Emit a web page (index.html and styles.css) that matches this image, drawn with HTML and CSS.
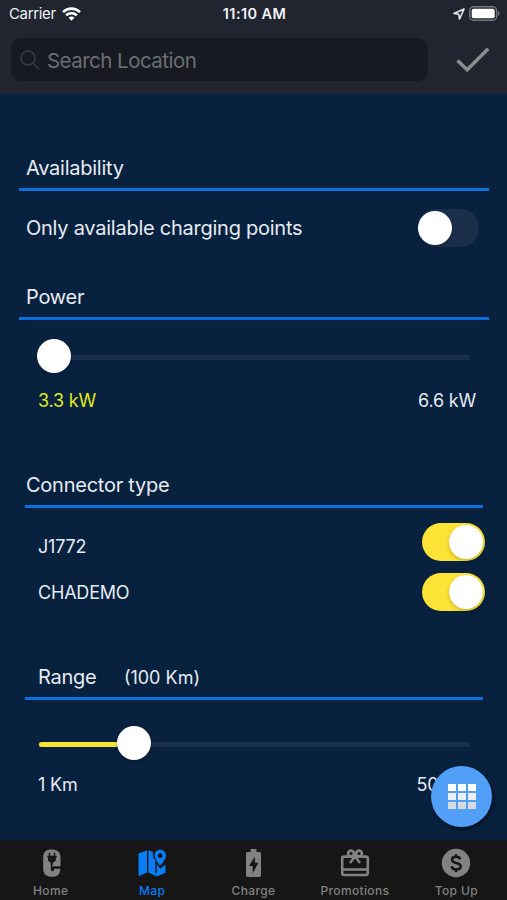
FILE: index.html
```html
<!DOCTYPE html>
<html lang="en">
<head>
    <meta charset="UTF-8">
    <meta name="viewport" content="width=device-width, initial-scale=1.0">
    <title>Search Filters</title>
    <link rel="stylesheet" href="styles.css">
</head>
<body>
    <header class="header">
        <div class="status-bar">
            <div class="carrier">
                <span>Carrier</span>
                <svg width="19" height="14" viewBox="0 0 19 14" fill="none" stroke="#fff" stroke-width="2.6">
                    <path d="M1 5.1C5.8.5 13.2.5 18 5.1M4.1 8.3c3.1-2.9 7.7-2.9 10.8 0"/>
                    <path d="M9.5 13.8l-3-3c1.8-1.6 4.2-1.6 6 0z" fill="#fff" stroke="none"/>
                </svg>
            </div>
            <span class="time">11:10 AM</span>
            <div class="indicators">
                <svg width="12" height="12" viewBox="0 0 12 12" fill="none" stroke="#e8e9ec" stroke-width="1.6" stroke-linejoin="round">
                    <path d="M11 1L1 5.4l4.7.8.9 4.8z"/>
                </svg>
                <svg width="31" height="15" viewBox="0 0 31 15">
                    <rect x=".7" y=".7" width="27" height="13.6" rx="4" fill="none" stroke="#73767c" stroke-width="1.4"/>
                    <rect x="2.7" y="2.7" width="23" height="9.6" rx="2" fill="#fff"/>
                    <path d="M29 5c2 1 2 4 0 5z" fill="#73767c"/>
                </svg>
            </div>
        </div>
        <div class="search-row">
            <div class="search-box">
                <svg width="20" height="20" viewBox="0 0 20 20" fill="none" stroke="#353941" stroke-width="1.7">
                    <circle cx="8" cy="8" r="7"/>
                    <path d="M13 13l6.3 6.3"/>
                </svg>
                <span>Search Location</span>
            </div>
            <svg class="check" width="34" height="26" viewBox="0 0 34 26" fill="none" stroke="#8b8c8f" stroke-width="3.6">
                <path d="M1.5 13.5l9.7 9.2L32.2 1.8"/>
            </svg>
        </div>
    </header>

    <main class="filters">
        <section class="group availability">
            <h2>Availability</h2>
            <div class="option">
                <span class="lead">Only available charging points</span>
                <div class="toggle"></div>
            </div>
        </section>

        <section class="group power">
            <h2>Power</h2>
            <div class="slider">
                <div class="thumb"></div>
            </div>
            <div class="limits">
                <span class="selected">3.3 kW</span>
                <span>6.6 kW</span>
            </div>
        </section>

        <section class="group narrow connector">
            <h2>Connector type</h2>
            <div class="option">
                <span>J1772</span>
                <div class="toggle on"></div>
            </div>
            <div class="option">
                <span class="chademo">CHADEMO</span>
                <div class="toggle on"></div>
            </div>
        </section>

        <section class="group narrow range">
            <h2>Range <small>(100 Km)</small></h2>
            <div class="slider">
                <div class="fill" style="width: 78px"></div>
                <div class="thumb"></div>
            </div>
            <div class="limits">
                <span>1 Km</span>
                <span>500 Km</span>
            </div>
        </section>
    </main>

    <div class="fab">
        <i></i><i></i><i></i>
        <i></i><i></i><i></i>
        <i></i><i></i><i></i>
    </div>

    <nav class="tabs">
        <div class="tab">
            <svg width="30" height="30" viewBox="0 0 30 30">
                <path d="M15.500 1.500c5.900 0 9 2.600 9 7.800v8.900h-9.700v2.300c0 2 .4 2.700 1.700 2.700s1.700-.7 1.700-2.500h6.100c0 5.500-2.700 8-8.200 8-6 0-8.900-2.800-8.900-8.300V9.300c0-5.200 2.700-7.800 8.300-7.800z" fill="currentColor"/>
                <path d="M13.500 4.800v4M18.500 4.800v4" stroke="#161616" stroke-width="1.500"/>
                <path d="M11.300 7.800h9.400v1.600h-.8v1.900c0 1.700-1.200 2.900-3 3.200v1.300c0 1.300-.7 2.200-2.200 2.600v-3.900c-1.700-.4-2.700-1.500-2.700-3.200V9.400h-.7z" fill="#161616"/>
            </svg>
            <span>Home</span>
        </div>
        <div class="tab active">
            <svg width="30" height="30" viewBox="0 0 30 30" fill="currentColor">
                <path d="M1.500 5.500L10 2.200v22.300l-8.500 3.700zM11.400 2.200l4.600 1.700c-.7 3 .2 5.600 2.300 8.600v12l1.400.6v3.400l-8.300-3.900z"/>
                <path d="M28.500 16.500v8.300l-8.800 3.700V16l3.500 4.700z"/>
                <path d="M23.200 1.800c-3.300 0-5.700 2.400-5.700 5.600 0 4 5.700 10.400 5.700 10.400S29 11.400 29 7.400c0-3.200-2.500-5.600-5.800-5.600zm0 3.500a2.400 2.400 0 110 4.800 2.400 2.400 0 010-4.800z" fill-rule="evenodd"/>
            </svg>
            <span>Map</span>
        </div>
        <div class="tab">
            <svg width="30" height="30" viewBox="0 0 30 30" fill="currentColor">
                <path d="M11.500 1h6v3h2.800c1 0 1.700.7 1.700 1.700v21.600c0 1-.7 1.700-1.700 1.700H8.700c-1 0-1.700-.7-1.700-1.700V5.700C7 4.700 7.700 4 8.700 4h2.800z"/>
                <path d="M16 8.500L10 18h3.700v7.500l5.600-10.700h-3.500z" fill="#161616"/>
            </svg>
            <span>Charge</span>
        </div>
        <div class="tab">
            <svg width="30" height="30" viewBox="0 0 30 30" fill="none" stroke="currentColor" stroke-width="2.6">
                <rect x="2.2" y="8.6" width="25.6" height="18.4" rx="2"/>
                <path d="M2 21.500h26"/>
                <circle cx="11" cy="5.500" r="2.900"/>
                <circle cx="19" cy="5.500" r="2.900"/>
                <path d="M10 15l5-6.500 5 6.500"/>
            </svg>
            <span>Promotions</span>
        </div>
        <div class="tab">
            <svg width="30" height="30" viewBox="0 0 30 30">
                <circle cx="15" cy="15" r="14.2" fill="currentColor"/>
                <path d="M19.300 11.300c-.5-1.700-1.900-2.600-4.200-2.600-2.500 0-4.100 1.200-4.100 3 0 4.500 8.700 2.100 8.700 6.600 0 2-1.700 3.200-4.400 3.200-2.600 0-4.300-1.100-4.700-3.200M15 6.300v3M15 21v3" fill="none" stroke="#161616" stroke-width="2.500"/>
            </svg>
            <span>Top Up</span>
        </div>
    </nav>
</body>
</html>
```
FILE: styles.css
```css
* {
    box-sizing: border-box;
}
body {
    margin: 0;
    height: 900px;
    display: flex;
    flex-direction: column;
    overflow: hidden;
    background: #08213f;
    color: #e6ebf1;
    font-family: Inter, "Liberation Sans", sans-serif;
}
svg {
    display: block;
}

/* header */
.header {
    flex-shrink: 0;
    height: 94px;
    background: #20252f;
}
.status-bar {
    height: 27px;
    padding: 0 7px 0 9px;
    display: grid;
    grid-template-columns: 1fr auto 1fr;
    align-items: center;
    color: #f1f2f4;
    font-size: 15px;
}
.carrier {
    display: flex;
    align-items: center;
    gap: 6px;
    letter-spacing: -0.35px;
}
.time {
    font-size: 14.5px;
    font-weight: 600;
    letter-spacing: 0.4px;
}
.indicators {
    display: flex;
    justify-content: flex-end;
    align-items: center;
    gap: 4px;
}
.search-row {
    display: flex;
    align-items: center;
    padding: 11px 17px 0 11px;
    justify-content: space-between;
}
.search-box {
    width: 417px;
    height: 43px;
    display: flex;
    align-items: center;
    gap: 7px;
    padding: 1px 0 0 9px;
    border-radius: 11px;
    background: #171a22;
    color: #6b6e73;
    font-size: 20.5px;
    letter-spacing: -0.53px;
}

/* filters */
.filters {
    flex: 1;
    min-height: 0;
    padding: 60px 18px 0 19px;
}
.group h2 {
    margin: 0;
    height: 37px;
    padding: 0 7px;
    border-bottom: 3px solid #0c70dc;
    font-size: 20px;
    font-weight: 400;
    line-height: 28px;
    letter-spacing: -0.25px;
}
.option {
    display: flex;
    justify-content: space-between;
    align-items: center;
    font-size: 18px;
    letter-spacing: -0.2px;
}
.lead {
    font-size: 20px;
}
.availability .option {
    height: 38px;
    margin-top: 18px;
    padding: 0 10px 0 7px;
    letter-spacing: -0.25px;
}
.toggle {
    width: 62px;
    height: 38px;
    padding: 2px 1px;
    border-radius: 19px;
    background: #1b2f4b;
}
.toggle::before {
    content: "";
    display: block;
    width: 34px;
    height: 34px;
    border-radius: 50%;
    background: #fff;
    box-shadow: 0 2px 4px rgba(0, 0, 0, 0.2);
}
.toggle.on {
    width: 63px;
    background: #fde335;
}
.toggle.on::before {
    margin-left: 26px;
}
.power {
    margin-top: 36px;
}
.slider {
    width: 432px;
    height: 34px;
    display: flex;
    align-items: center;
    margin: 19px 0 0 18px;
    background: linear-gradient(#1b2e4a, #1b2e4a) 0 16px / 100% 5px no-repeat;
}
.fill {
    height: 5px;
    margin: 3px 0 0 1px;
    border-radius: 3px 0 0 3px;
    background: #f7e436;
}
.thumb {
    width: 34px;
    height: 34px;
    border-radius: 50%;
    background: #fff;
    box-shadow: 0 1px 3px rgba(0, 0, 0, 0.25);
}
.limits {
    display: flex;
    justify-content: space-between;
    margin-top: 17px;
    padding: 0 13px 0 19px;
    font-size: 18px;
    line-height: 22px;
    letter-spacing: -0.2px;
}
.selected {
    color: #e0ee18;
}
.narrow {
    margin: 0 6px;
}
.narrow h2 {
    padding: 0 1px;
}
.connector {
    margin-top: 59px;
}
.connector .option {
    height: 38px;
    margin: 15px -2px 0 0;
    padding-left: 13px;
}
.connector .option + .option {
    margin-top: 12px;
}
.connector .option span {
    padding-top: 8px;
}
.connector .option .chademo {
    padding-top: 1px;
}
.range {
    margin-top: 52px;
}
.range h2 {
    padding-left: 13px;
}
.range small {
    margin-left: 22px;
    font-size: 18px;
    letter-spacing: 0;
}
.range .slider {
    margin: 26px 0 0 13px;
    width: 431px;
}
.range .limits {
    margin-top: 14px;
    padding: 0 1px 0 13px;
}

/* floating menu button */
.fab {
    position: absolute;
    left: 431px;
    top: 766px;
    width: 61px;
    height: 61px;
    display: grid;
    grid-template-columns: repeat(3, 8px);
    grid-auto-rows: 7px;
    gap: 2px;
    place-content: center;
    border-radius: 50%;
    background: #529ff8;
    box-shadow: 1px 2px 4px rgba(0, 0, 0, 0.6);
}
.fab i {
    background: #fff;
}
.fab i:nth-child(n+4) {
    background: #eeeff1;
}
.fab i:nth-child(n+7) {
    background: #d6d9de;
}

/* bottom tabs */
.tabs {
    flex-shrink: 0;
    height: 60px;
    display: flex;
    background: #161616;
    color: #828282;
}
.tab {
    flex: 1;
    display: flex;
    flex-direction: column;
    align-items: center;
    padding-top: 8px;
    font-size: 12px;
    font-weight: 500;
    line-height: 14px;
    letter-spacing: 0.35px;
}
.tab span {
    margin-top: 6px;
}
.tab.active {
    color: #087df5;
}
```
